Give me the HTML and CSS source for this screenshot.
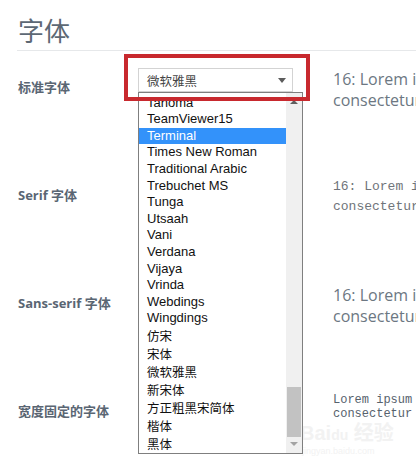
FILE: index.html
```html
<!DOCTYPE html>
<html lang="zh-CN">
<head>
<meta charset="utf-8">
<title>字体</title>
<link rel="stylesheet" href="styles.css">
</head>
<body>
<div class="page">
  <h1 class="title">字体</h1>
  <div class="rule"></div>
  <div class="settings">
    <div class="row">
      <div class="label">标准字体</div>
      <div class="control">
        <div class="select">
          <span class="select-value">微软雅黑</span>
          <span class="select-arrow"></span>
        </div>
        <div class="dropdown">
          <ul class="options">
            <li class="option">Tahoma</li>
            <li class="option">TeamViewer15</li>
            <li class="option selected">Terminal</li>
            <li class="option">Times New Roman</li>
            <li class="option">Traditional Arabic</li>
            <li class="option">Trebuchet MS</li>
            <li class="option">Tunga</li>
            <li class="option">Utsaah</li>
            <li class="option">Vani</li>
            <li class="option">Verdana</li>
            <li class="option">Vijaya</li>
            <li class="option">Vrinda</li>
            <li class="option">Webdings</li>
            <li class="option">Wingdings</li>
            <li class="option cjk">仿宋</li>
            <li class="option cjk">宋体</li>
            <li class="option cjk">微软雅黑</li>
            <li class="option cjk">新宋体</li>
            <li class="option cjk">方正粗黑宋简体</li>
            <li class="option cjk">楷体</li>
            <li class="option cjk">黑体</li>
          </ul>
          <div class="scrollbar">
            <span class="sb-up"></span>
            <span class="sb-thumb"></span>
            <span class="sb-down"></span>
          </div>
        </div>
        <div class="annotation"></div>
      </div>
      <div class="sample sample-sans">
        <div>16: Lorem ipsum dolor sit amet,</div>
        <div>consectetur adipiscing elit.</div>
      </div>
    </div>

    <div class="row">
      <div class="label">Serif 字体</div>
      <div class="control"></div>
      <div class="sample sample-mono">
        <div>16: Lorem ipsum dolor sit amet,</div>
        <div>consectetur adipiscing elit.</div>
      </div>
    </div>

    <div class="row">
      <div class="label">Sans-serif 字体</div>
      <div class="control"></div>
      <div class="sample sample-sans">
        <div>16: Lorem ipsum dolor sit amet,</div>
        <div>consectetur adipiscing elit.</div>
      </div>
    </div>

    <div class="row">
      <div class="label">宽度固定的字体</div>
      <div class="control"></div>
      <div class="sample sample-small">
        <div>Lorem ipsum dolor sit amet,</div>
        <div>consectetur adipiscing elit.</div>
      </div>
    </div>
  </div>
  <div class="watermark">
    <div class="wm-logo">Bai<span class="wm-du">du</span> 经验</div>
    <div class="wm-url">jingyan.baidu.com</div>
  </div>
</div>
</body>
</html>
```

FILE: styles.css
```css
html, body {
  margin: 0;
  padding: 0;
  background: #ffffff;
  overflow: hidden;
}

body {
  width: 416px;
  height: 467px;
  font-family: "Liberation Sans", "Noto Sans CJK SC", sans-serif;
}

.page {
  position: relative;
  padding-left: 17px;
  height: 467px;
  overflow: hidden;
}

.title {
  margin: 0;
  padding: 14px 0 0 1px;
  height: 32px;
  line-height: 32px;
  font-size: 26px;
  font-weight: 400;
  color: #5d6874;
  font-family: "Noto Sans CJK SC", sans-serif;
}

.rule {
  margin-top: 4px;
  height: 1px;
  background: #e6e8ea;
}

.settings {
  padding-top: 17.5px;
  padding-left: 1px;
}

.row {
  display: flex;
  align-items: flex-start;
  height: 108px;
}

.label {
  width: 120px;
  flex: none;
  margin-top: 8.5px;
  line-height: 20px;
  font-size: 13px;
  font-weight: 700;
  color: #5a6673;
  font-family: "Open Sans", "Noto Sans CJK SC", sans-serif;
  white-space: nowrap;
}

.control {
  position: relative;
  width: 195px;
  flex: none;
}

.select {
  display: flex;
  align-items: center;
  justify-content: space-between;
  width: 155px;
  height: 24px;
  margin-top: -0.5px;
  box-sizing: border-box;
  border: 1px solid #d3d3d3;
  background: #ffffff;
  padding: 0 6px 0 8px;
}

.select-value {
  font-family: "Noto Sans CJK SC", sans-serif;
  font-size: 12.5px;
  color: #444;
}

.select-arrow {
  width: 0;
  height: 0;
  border-left: 4.5px solid transparent;
  border-right: 4.5px solid transparent;
  border-top: 5px solid #5c5c5c;
}

.dropdown {
  position: absolute;
  left: 0;
  top: 23.5px;
  width: 165px;
  height: 362px;
  box-sizing: border-box;
  border: 1px solid #7f7f7f;
  background: #ffffff;
  z-index: 2;
}

.options {
  list-style: none;
  margin: 0;
  padding: 1.7px 0 0 0;
  width: 147px;
}

.option {
  height: 16.6px;
  line-height: 16.6px;
  padding-left: 8px;
  font-size: 13px;
  color: #111;
  white-space: nowrap;
}

.option.cjk {
  height: 18px;
  line-height: 18px;
  font-family: "Noto Sans CJK SC", sans-serif;
  font-size: 12.5px;
}

.option.selected {
  background: #3392fa;
  color: #ffffff;
}

.scrollbar {
  position: absolute;
  top: 0;
  right: 0;
  bottom: 0;
  width: 16px;
  background: #f0f0f0;
}

.sb-up {
  position: absolute;
  top: 7px;
  left: 4px;
  border-left: 4px solid transparent;
  border-right: 4px solid transparent;
  border-bottom: 4px solid #606060;
}

.sb-thumb {
  position: absolute;
  top: 294px;
  left: 1px;
  width: 14px;
  height: 50px;
  background: #c2c2c2;
}

.sb-down {
  position: absolute;
  bottom: 7px;
  left: 4px;
  border-left: 4px solid transparent;
  border-right: 4px solid transparent;
  border-top: 4px solid #a3a3a3;
}

.annotation {
  position: absolute;
  left: -14px;
  top: -14.5px;
  width: 186px;
  height: 47px;
  box-sizing: border-box;
  border: 4px solid #c8292e;
  z-index: 3;
}

.sample {
  white-space: nowrap;
}

.sample-sans {
  font-family: "Open Sans", "Noto Sans", sans-serif;
  font-size: 16px;
  line-height: 21px;
  color: #6c7782;
}

.sample-mono {
  padding-top: 0.5px;
  font-family: "Liberation Mono", monospace;
  font-size: 13px;
  line-height: 20px;
  color: #6f747a;
}

.sample-small {
  padding-top: 0.5px;
  font-family: "Liberation Mono", monospace;
  font-size: 12px;
  line-height: 14px;
  color: #57626d;
}

.watermark {
  position: absolute;
  left: 300px;
  top: 422px;
  color: #f2f2f2;
  pointer-events: none;
}

.wm-logo {
  font-family: "Liberation Sans", "Noto Sans CJK SC", sans-serif;
  font-size: 20px;
  font-weight: 700;
  line-height: 22px;
}

.wm-du {
  font-size: 14px;
}

.wm-url {
  font-size: 9px;
  line-height: 11px;
  padding-left: 2px;
}
```
